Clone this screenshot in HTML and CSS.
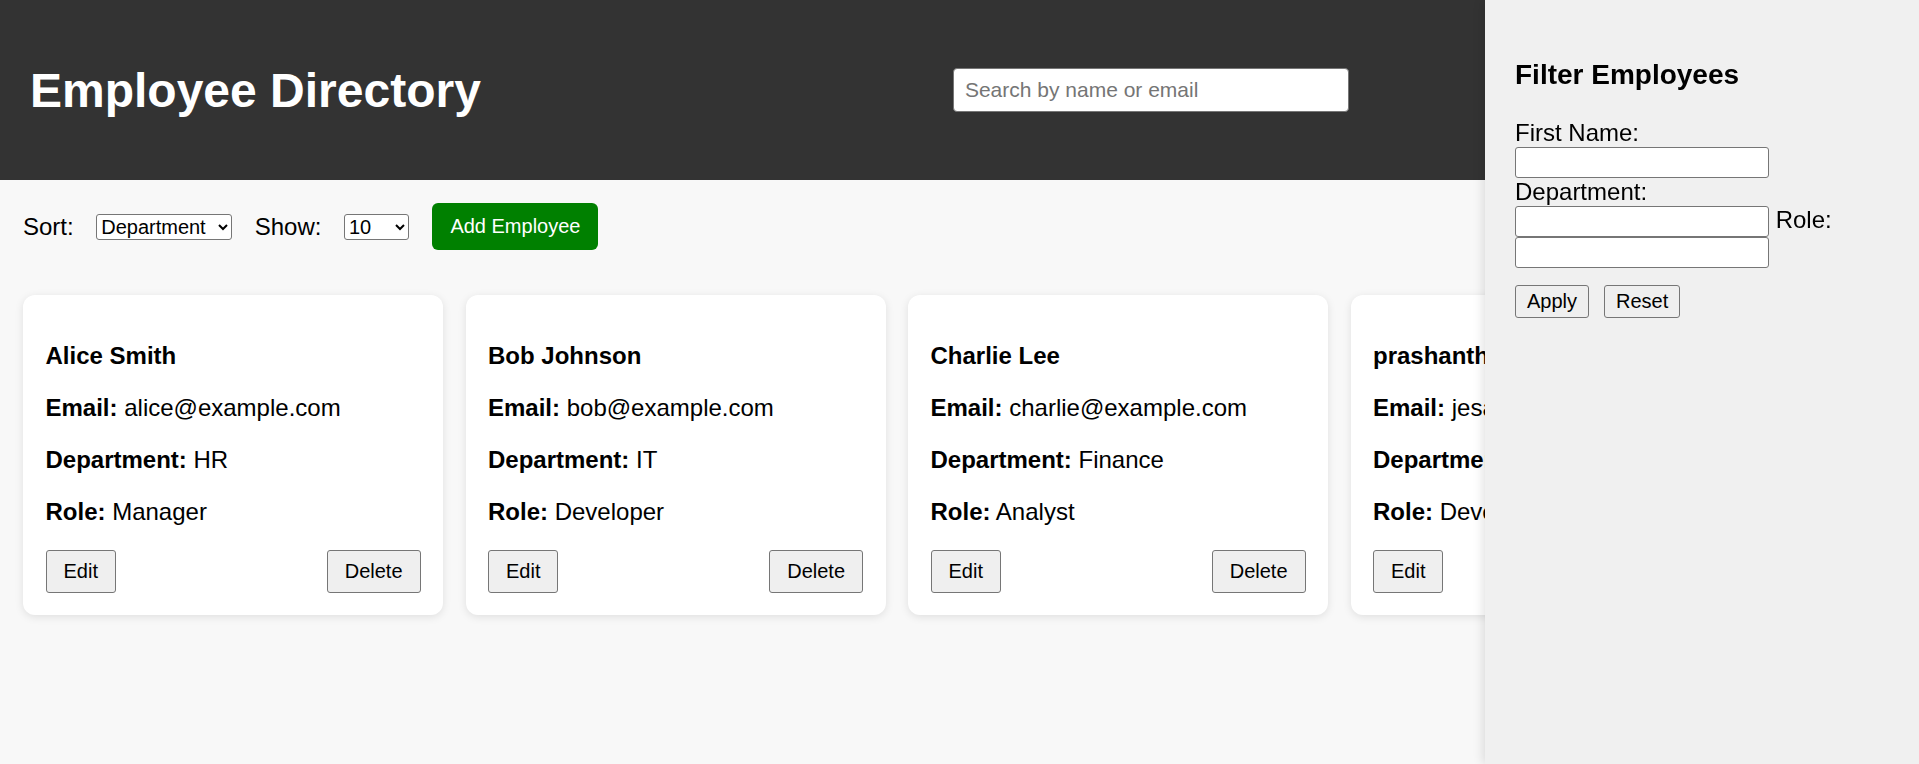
FILE: index.html
```html
<!DOCTYPE html>
<html lang="en">
<head>
<meta charset="utf-8">
<title>Employee Directory</title>
<link rel="stylesheet" href="styles.css">
</head>
<body>
<header class="topbar">
  <h1 class="title">Employee Directory</h1>
  <input class="search" type="text" placeholder="Search by name or email">
  <button class="filter-toggle">Filter</button>
</header>

<main class="content">
  <div class="controls">
    <label class="ctl-label">Sort:</label>
    <select class="select sort-select"><option>Department</option><option>First Name</option></select>
    <label class="ctl-label">Show:</label>
    <select class="select show-select"><option>10</option><option>25</option></select>
    <button class="add-btn">Add Employee</button>
  </div>

  <div class="cards">
    <div class="card">
      <p class="name">Alice Smith</p>
      <p class="field"><strong>Email:</strong> alice@example.com</p>
      <p class="field"><strong>Department:</strong> HR</p>
      <p class="field"><strong>Role:</strong> Manager</p>
      <div class="card-actions">
        <button class="btn">Edit</button>
        <button class="btn">Delete</button>
      </div>
    </div>
    <div class="card">
      <p class="name">Bob Johnson</p>
      <p class="field"><strong>Email:</strong> bob@example.com</p>
      <p class="field"><strong>Department:</strong> IT</p>
      <p class="field"><strong>Role:</strong> Developer</p>
      <div class="card-actions">
        <button class="btn">Edit</button>
        <button class="btn">Delete</button>
      </div>
    </div>
    <div class="card">
      <p class="name">Charlie Lee</p>
      <p class="field"><strong>Email:</strong> charlie@example.com</p>
      <p class="field"><strong>Department:</strong> Finance</p>
      <p class="field"><strong>Role:</strong> Analyst</p>
      <div class="card-actions">
        <button class="btn">Edit</button>
        <button class="btn">Delete</button>
      </div>
    </div>
    <div class="card">
      <p class="name">prashanth</p>
      <p class="field"><strong>Email:</strong> jesa@gmail.com</p>
      <p class="field"><strong>Department:</strong> IT</p>
      <p class="field"><strong>Role:</strong> Developer</p>
      <div class="card-actions">
        <button class="btn">Edit</button>
        <button class="btn">Delete</button>
      </div>
    </div>
  </div>
</main>

<aside class="sidebar">
  <h3 class="sidebar-title">Filter Employees</h3>
  <div class="filter-form">
    <label>First Name:</label> <input class="filter-input" type="text"> <label>Department:</label> <input class="filter-input" type="text"> <label>Role:</label> <input class="filter-input" type="text">
  </div>
  <div class="filter-actions">
    <button class="small-btn">Apply</button>
    <button class="small-btn">Reset</button>
  </div>
</aside>
</body>
</html>
```

FILE: styles.css
```css
html, body {
  margin: 0;
  padding: 0;
}

body {
  background: #f8f8f8;
  font-family: "Liberation Sans", Arial, sans-serif;
  font-size: 24px;
  color: #000;
  height: 764px;
  overflow: hidden;
}

.topbar {
  background: #333333;
  height: 180px;
  box-sizing: border-box;
  padding: 0 30px;
  display: flex;
  align-items: center;
  justify-content: space-between;
}

.title {
  margin: 0;
  color: #ffffff;
  font-size: 48px;
  font-weight: bold;
  line-height: normal;
}

.search {
  width: 396px;
  height: 44px;
  box-sizing: border-box;
  padding: 0 11px;
  font-family: "Liberation Sans", Arial, sans-serif;
  font-size: 21px;
  border: 1px solid #767676;
  border-radius: 4px;
  background: #fff;
  color: #000;
  outline: none;
}

.search::placeholder {
  color: #757575;
}

.filter-toggle {
  width: 68px;
  height: 44px;
  font-family: "Liberation Sans", Arial, sans-serif;
  font-size: 20px;
  border: 1px solid #767676;
  border-radius: 3px;
  background: #efefef;
}

.content {
  padding: 23px 23px 0 23px;
}

.controls {
  display: flex;
  align-items: center;
  gap: 22.5px;
  margin-bottom: 45px;
}

.ctl-label {
  font-size: 24px;
}

.select {
  height: 26px;
  box-sizing: border-box;
  font-family: "Liberation Sans", Arial, sans-serif;
  font-size: 20px;
  border: 1px solid #767676;
  border-radius: 3px;
  background: #fff;
  color: #000;
  padding: 0;
}

.sort-select {
  width: 136px;
}

.show-select {
  width: 65px;
}

.add-btn {
  margin-left: 1px;
  background: #008000;
  color: #fff;
  border: none;
  border-radius: 6px;
  padding: 12px 18px;
  font-family: "Liberation Sans", Arial, sans-serif;
  font-size: 20px;
  line-height: 23px;
}

.cards {
  display: flex;
  gap: 22.5px;
}

.card {
  flex: 0 0 420px;
  box-sizing: border-box;
  padding: 22.5px;
  background: #fff;
  border-radius: 12px;
  box-shadow: 0 2px 8px rgba(0, 0, 0, 0.1);
}

.name {
  font-weight: bold;
  margin: 24px 0;
}

.field {
  margin: 24px 0;
  white-space: nowrap;
}

.card-actions {
  display: flex;
  justify-content: space-between;
}

.btn {
  font-family: "Liberation Sans", Arial, sans-serif;
  font-size: 20px;
  line-height: 23px;
  padding: 9px 17px;
  border: 1px solid #767676;
  border-radius: 3px;
  background: #efefef;
  color: #000;
}

.sidebar {
  position: fixed;
  top: 0;
  right: 0;
  bottom: 0;
  width: 434px;
  box-sizing: border-box;
  padding: 31px 30px 30px 30px;
  background: #f0f0f0;
  box-shadow: -2px 0 10px rgba(0, 0, 0, 0.12);
}

.sidebar-title {
  font-size: 28px;
  font-weight: bold;
  margin: 28px 0;
}

.filter-form {
  font-size: 24px;
}

.filter-input {
  width: 254px;
  height: 31px;
  box-sizing: border-box;
  padding: 1px 3px;
  font-family: "Liberation Sans", Arial, sans-serif;
  font-size: 20px;
  border: 1px solid #767676;
  border-radius: 3px;
  background: #fff;
}

.filter-actions {
  display: flex;
  gap: 15px;
  margin-top: 17px;
}

.small-btn {
  font-family: "Liberation Sans", Arial, sans-serif;
  font-size: 20px;
  line-height: 23px;
  padding: 4px 11px;
  border: 1px solid #767676;
  border-radius: 3px;
  background: #efefef;
  color: #000;
}
```
